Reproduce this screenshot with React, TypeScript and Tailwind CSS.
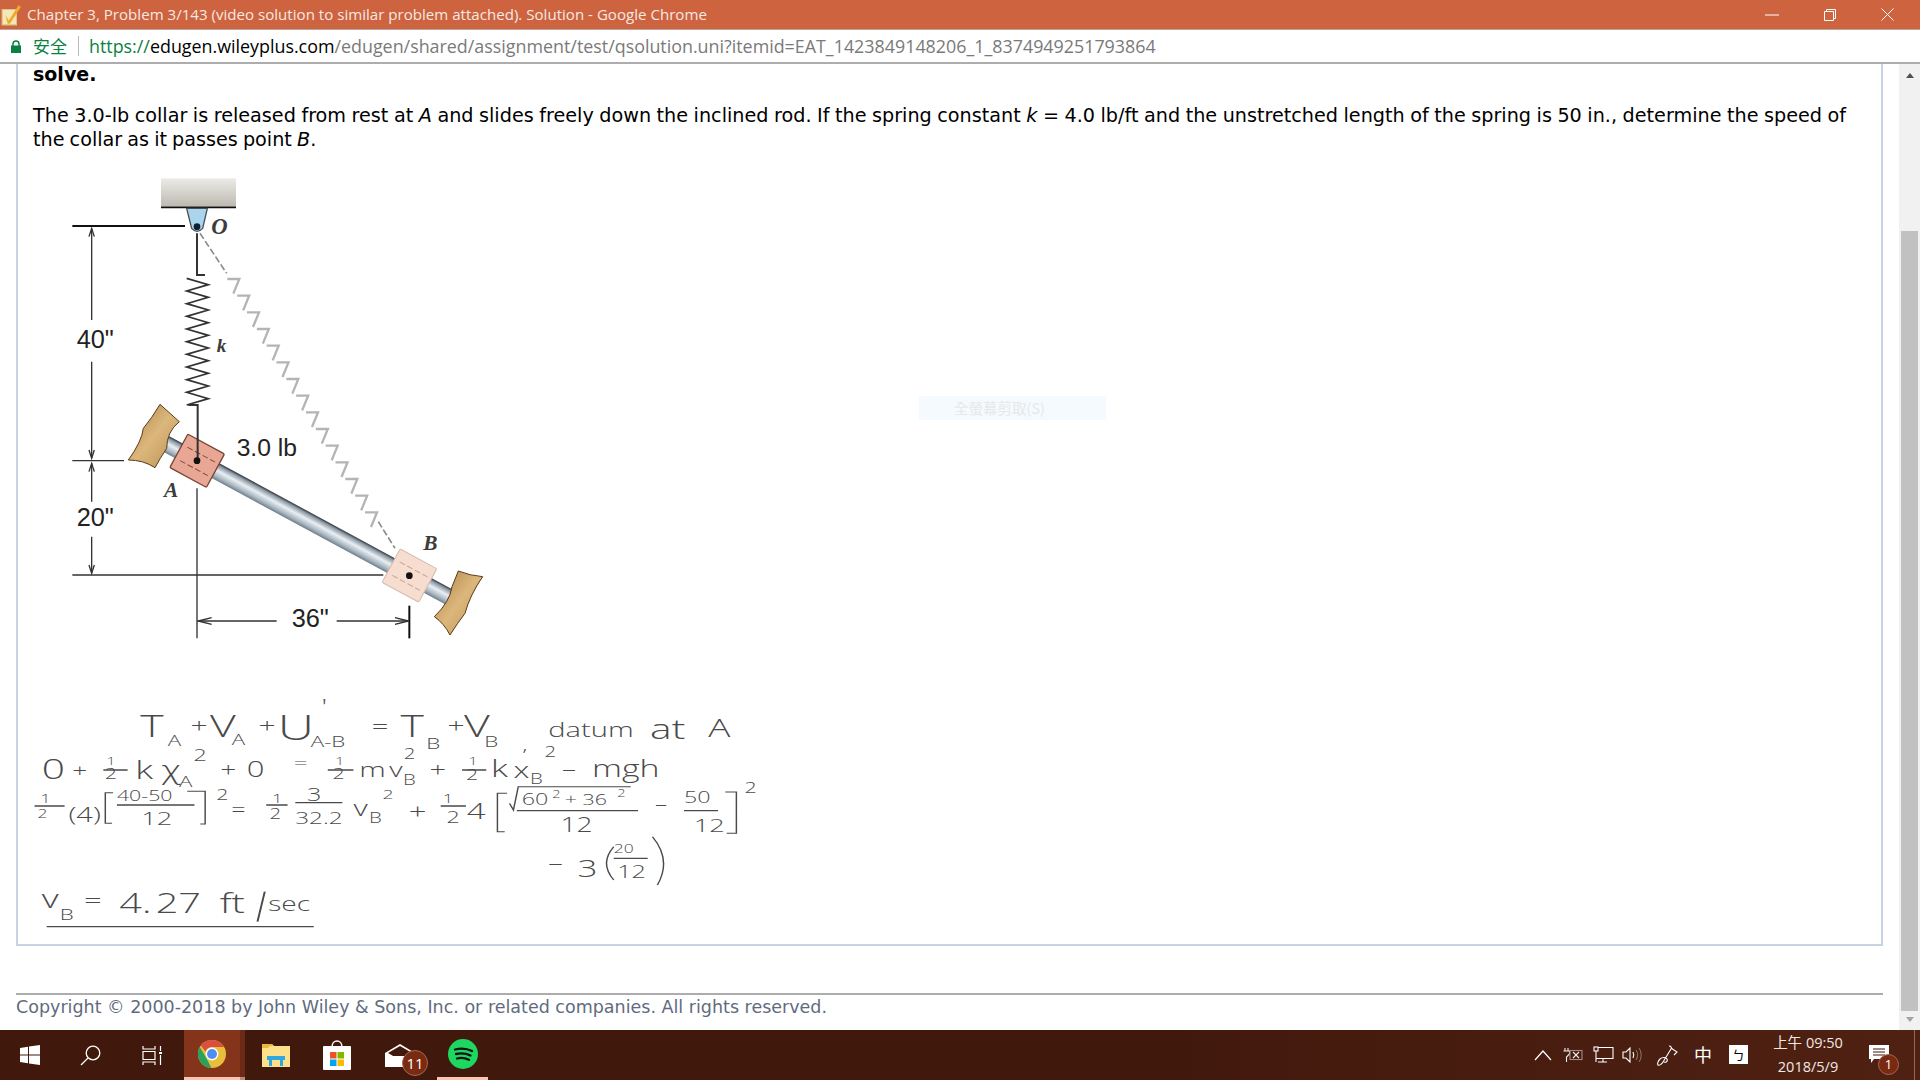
const SANS = "font-['Open_Sans',sans-serif]";
const VERDANA = "font-['DejaVu_Sans',sans-serif]";

function ChromeIcon() {
  return (
    <svg width="28" height="28" viewBox="0 0 28 28">
      <circle cx="14" cy="14" r="14" fill="#e8bf3a" />
      <path d="M14 0a14 14 0 0 1 12.100 7H14a7 7 0 0 0-6.600 4.600L2.600 5.200A14 14 0 0 1 14 0z" fill="#d9503f" />
      <path d="M1.800 7 8 17.500 13.500 28A14 14 0 0 1 1.800 7z" fill="#2ba160" />
      <circle cx="14" cy="14" r="6.400" fill="#fff" />
      <circle cx="14" cy="14" r="5" fill="#4f8ef0" />
    </svg>
  );
}

function TrayIcons() {
  return (
    <>
      <svg width="18" height="12" viewBox="0 0 18 12" className="absolute left-[1534px] top-[19px]" fill="none" stroke="#fff" strokeWidth="1.200">
        <path d="M1 11 9 2l8 9" />
      </svg>
      <svg width="22" height="16" viewBox="0 0 22 16" className="absolute left-[1562px] top-[17px]" fill="none" stroke="#eee" strokeWidth="1.100">
        <path d="M3 1v3M6 1v3M1.500 4h6v3L4.500 10v5" />
        <rect x="8" y="3.500" width="12" height="9" stroke="#a48c80" />
        <path d="m11 5 6 6M17 5l-6 6" />
      </svg>
      <svg width="21" height="17" viewBox="0 0 21 17" className="absolute left-[1593px] top-[16px]" fill="none" stroke="#fff" strokeWidth="1.100">
        <path d="M5 1.500h15v11H3M3 5v11M5 16h9M10 13v3" />
        <rect x="1" y="1" width="4" height="4" />
      </svg>
      <svg width="21" height="16" viewBox="0 0 21 16" className="absolute left-[1622px] top-[17px]" fill="none" stroke="#fff" strokeWidth="1.100">
        <path d="M1 5h3l4-4v14l-4-4H1z" />
        <path d="M11 5c1 2 1 4 0 6" />
        <path d="M14 3c2 3 2 7 0 10M17 1c3 4 3 10 0 14" stroke="#8c6d60" />
      </svg>
      <svg width="21" height="22" viewBox="0 0 21 22" className="absolute left-[1657px] top-[15px]" fill="none" stroke="#fff" strokeWidth="1.100">
        <path d="M12 1c2 0 3 2 2 3L6 17c-1 2-4 4-5 3s0-4 2-6c2-2 6-2 7 0s-1 4-3 3M14 3l6 4-3 3" />
      </svg>
    </>
  );
}

function Taskbar() {
  return (
    <div className="relative flex h-[50px] shrink-0 items-center bg-[linear-gradient(90deg,#41190c_0%,#41190c_60%,#4f2113_100%)]">
      <div className="flex h-full w-[60px] items-center justify-center">
        <svg width="20" height="20" viewBox="0 0 20 20" fill="#fff">
          <path d="M0 3l8-1.200v7.700H0zM9 1.600 20 0v9.500H9zM0 10.500h8v7.700L0 17zM9 10.500h11V20L9 18.400z" />
        </svg>
      </div>
      <div className="flex h-full w-[60px] items-center justify-center">
        <svg width="21" height="21" viewBox="0 0 21 21" fill="none" stroke="#fff" strokeWidth="1.300">
          <circle cx="13" cy="8" r="6.800" />
          <path d="M8 13 1 20" />
        </svg>
      </div>
      <div className="flex h-full w-[64px] items-center justify-center">
        <svg width="20" height="19" viewBox="0 0 20 19" fill="none" stroke="#fff" strokeWidth="1.200">
          <path d="M1 0v3h12V0M1 5.500h12v8H1zM1 19v-3h12v3M18.500 0v5M18.500 9v10" />
          <rect x="17" y="6" width="3" height="2" fill="#fff" stroke="none" />
        </svg>
      </div>
      <div className="flex h-full w-[56px] items-center justify-center border-b-[3px] border-[#f8c6b2] bg-[#84341a]">
        <ChromeIcon />
      </div>
      <div className="h-full w-[5px] border-b-[3px] border-[#b98c7c] bg-[#6a2a15]" />
      <div className="flex h-full w-[62px] items-center justify-center">
        <svg width="28" height="24" viewBox="0 0 28 24">
          <path d="M0 1h10l2 2h16v21H0z" fill="#fde08a" />
          <path d="M0 1h10l2 2H8L6 5H0z" fill="#e8b93f" />
          <path d="M5 13h18v4h-2v6h-3v-6h-8v6H7v-6H5z" fill="#2fa8e0" />
        </svg>
      </div>
      <div className="flex h-full w-[60px] items-center justify-center">
        <svg width="30" height="30" viewBox="0 0 30 30">
          <path d="M10 7c0-8 10-8 10 0" fill="none" stroke="#fff" strokeWidth="1.500" />
          <rect x="1" y="6" width="28" height="24" rx="1" fill="#fff" />
          <rect x="8" y="12" width="6.500" height="6.500" fill="#f25022" />
          <rect x="15.500" y="12" width="6.500" height="6.500" fill="#7fba00" />
          <rect x="8" y="19.500" width="6.500" height="6.500" fill="#00a4ef" />
          <rect x="15.500" y="19.500" width="6.500" height="6.500" fill="#ffb900" />
        </svg>
      </div>
      <div className="relative flex h-full w-[66px] items-center justify-center">
        <svg width="30" height="24" viewBox="0 0 30 24">
          <path d="M0 10 15 1l15 9v14H0z" fill="#fff" />
          <path d="M3 10 15 3l12 7-12 7z" fill="#41190c" />
          <path d="M0 10l15 8 15-8v3H0z" fill="#fff" />
        </svg>
        <div className="absolute left-[35px] top-[20px] flex h-[26px] w-[26px] items-center justify-center rounded-full border border-[#a06a55] bg-[#7a2a10] text-[15px] text-white">
          11
        </div>
      </div>
      <div className="ml-[4px] flex h-full w-[51px] items-center justify-center border-b-[3px] border-[#f8c6b2]">
        <svg width="30" height="30" viewBox="0 0 30 30">
          <circle cx="15" cy="15" r="15" fill="#1ed760" />
          <path d="M7 10.500c6-1.500 12-1 17 1.500M8 15c5-1 10-.700 14.500 1.500M9 19.500c4-1 8-.600 12 1.200" fill="none" stroke="#111" strokeWidth="2.300" strokeLinecap="round" />
        </svg>
      </div>
      <TrayIcons />
      <span className="absolute left-[1694px] top-[12px] text-[18px] leading-[24px] text-white font-['Noto_Sans_CJK_TC',sans-serif]">
        中
      </span>
      <div className="absolute left-[1729px] top-[15px] flex h-[19px] w-[19px] items-center justify-center bg-white text-[13px] leading-none text-black font-['Noto_Sans_CJK_TC',sans-serif]">
        ㄅ
      </div>
      <div className="absolute left-[1760px] top-[1px] w-[96px] text-center text-[14.500px] leading-[24px] text-[#f3e7e2] font-['Open_Sans','Noto_Sans_CJK_TC',sans-serif]">
        <div>上午 09:50</div>
        <div>2018/5/9</div>
      </div>
      <svg width="20" height="18" viewBox="0 0 20 18" className="absolute left-[1869px] top-[15px]">
        <path d="M0 0h20v14H5l-3 4v-4H0z" fill="#fff" />
        <path d="M4 4h12M4 7h12M4 10h12" stroke="#41190c" />
      </svg>
      <div className="absolute left-[1878px] top-[24px] flex h-[21px] w-[21px] items-center justify-center rounded-full border border-[#a06a55] bg-[#7a2a10] text-[13px] text-white">
        1
      </div>
      <div className="absolute right-[5px] top-0 h-full w-px bg-[#8c6d60]" />
    </div>
  );
}

const coil = Array.from({ length: 21 }, (_, i) => `${i % 2 ? 565 : 500},${340 + i * 19}`).join(" ");

function DashedSpring() {
  const parts = Array.from({ length: 15 }, (_, i) => {
    const cx = 640 + i * 29.500;
    const cy = 340 + i * 50;
    return `M${cx - 18} ${cy + 2}H${cx + 18}L${cx} ${cy + 46}`;
  });
  return (
    <g fill="none">
      <path d="M540 205 620 325M1075 1070l50 80" stroke="#8a8a8a" strokeWidth="5" strokeDasharray="20 8" />
      <path d={parts.join("")} stroke="#b4b4b4" strokeWidth="7" />
    </g>
  );
}

function Diagram() {
  const arrow = (x: number, y: number, dir: number) => `M${x - 8} ${y + dir * 25}L${x} ${y}L${x + 8} ${y + dir * 25}`;
  return (
    <svg width="480" height="490" viewBox="0 0 1440 1470" className="ml-[-13px] mt-[13px] block">
      <defs>
        <linearGradient id="wall" x1="0" y1="0" x2="0" y2="1">
          <stop offset="0" stopColor="#ecebe6" />
          <stop offset="1" stopColor="#bcb9b0" />
        </linearGradient>
        <linearGradient id="rod" x1="0" y1="0" x2="0" y2="1">
          <stop offset="0" stopColor="#2b3138" />
          <stop offset="0.15" stopColor="#8d99a4" />
          <stop offset="0.45" stopColor="#eaf0f4" />
          <stop offset="0.8" stopColor="#a5b3be" />
          <stop offset="1" stopColor="#6d7c88" />
        </linearGradient>
        <linearGradient id="tan" x1="0" y1="0" x2="1" y2="1">
          <stop offset="0" stopColor="#a87f45" />
          <stop offset="0.5" stopColor="#dcb77c" />
          <stop offset="1" stopColor="#b88e52" />
        </linearGradient>
      </defs>
      <rect x="423" y="40" width="225" height="85" fill="url(#wall)" />
      <path d="M423 127H648" stroke="#111" strokeWidth="5" />
      <path d="M500 130H562L548 190Q531 208 515 190Z" fill="#a9d6ec" stroke="#4a5058" strokeWidth="4" />
      <circle cx="531" cy="185" r="10" fill="#10202c" />
      <path d="M157 183H495" stroke="#111" strokeWidth="6" />
      <path d="M215 190V465M215 590V880M215 895V1010M215 1115V1225M157 887H312M157 1230H1090M531 970V1420M531 1368H770M950 1368H1165" stroke="#333" strokeWidth="4" fill="none" />
      <path d={`${arrow(215, 190, 1)}${arrow(215, 880, -1)}${arrow(215, 895, 1)}${arrow(215, 1225, -1)}`} stroke="#333" strokeWidth="4" fill="none" />
      <path d="M575 1358 535 1368 575 1378M1125 1358 1165 1368 1125 1378" stroke="#333" strokeWidth="4" fill="none" />
      <path d="M1168 1322V1420" stroke="#111" strokeWidth="6" />
      <DashedSpring />
      <g transform="translate(531 887) rotate(28.400)">
        <rect x="-108" y="-25" width="985" height="50" fill="url(#rod)" />
        <rect x="-62" y="-57" width="125" height="114" rx="4" fill="#e8a795" stroke="#7a4433" strokeWidth="4" />
        <path d="M-45 -22H50M-45 24H50" stroke="#8b4a38" strokeWidth="3" strokeDasharray="18 8" />
        <g transform="translate(724 0)">
          <rect x="-62" y="-57" width="125" height="114" rx="4" fill="#f6ddd0" stroke="#d4bcae" strokeWidth="3" />
          <path d="M-45 -22H50M-45 24H50" stroke="#c4a596" strokeWidth="3" strokeDasharray="18 8" />
        </g>
      </g>
      <path d="M420 718Q450 745 478 770Q440 800 440 850Q420 880 405 908Q370 885 325 885Q365 830 370 790Q395 760 420 718Z" fill="url(#tan)" stroke="#5a3a1a" strokeWidth="3" />
      <path d="M1315 1218Q1350 1232 1388 1235Q1350 1290 1335 1345Q1312 1375 1290 1410Q1272 1375 1243 1355Q1290 1310 1296 1265Z" fill="url(#tan)" stroke="#5a3a1a" strokeWidth="3" />
      <path d="M531 205V330H555" stroke="#333" strokeWidth="6" fill="none" />
      <polyline points={coil} fill="none" stroke="#333" strokeWidth="5" />
      <path d="M505 720H533V885" stroke="#333" strokeWidth="6" fill="none" />
      <circle cx="531" cy="887" r="10" fill="#111" />
      <circle cx="1168" cy="1232" r="10" fill="#111" />
      <g fill="#222" fontFamily="'Liberation Sans',sans-serif" fontSize="76">
        <text x="170" y="550">40"</text>
        <text x="170" y="1084">20"</text>
        <text x="650" y="872" fontSize="74">3.0 lb</text>
        <text x="815" y="1386">36"</text>
      </g>
      <g fill="#3c3c3c" fontFamily="'Liberation Serif',serif" fontStyle="italic" fontWeight="600">
        <text x="574" y="207" fontSize="68">O</text>
        <text x="590" y="560" fontSize="58">k</text>
        <text x="432" y="996" fontSize="64">A</text>
        <text x="1210" y="1156" fontSize="64">B</text>
      </g>
    </svg>
  );
}

const marks: [number, number, number, string][] = [
  [248, 140, 92, "T"], [305, 168, 46, "A"], [352, 130, 62, "+"], [392, 140, 92, "V"], [437, 166, 46, "A"], [492, 130, 62, "+"],
  [532, 150, 104, "U"], [622, 72, 60, "'"], [600, 172, 46, "A-B"], [726, 132, 60, "="], [785, 140, 92, "T"], [838, 178, 46, "B"],
  [882, 130, 62, "+"], [916, 140, 92, "V"], [958, 172, 46, "B"], [1036, 184, 50, ","], [1090, 142, 60, "datum"], [1300, 146, 84, "at"], [1420, 142, 76, "A"],
  [45, 268, 84, "0"], [108, 262, 54, "+"], [178, 226, 34, "1"], [175, 268, 44, "2"], [238, 268, 76, "k"], [292, 268, 78, "χ"], [328, 292, 46, "A"], [358, 214, 48, "2"],
  [413, 262, 58, "+"], [468, 262, 64, "0"], [565, 238, 50, "="], [650, 226, 34, "1"], [645, 266, 44, "2"], [700, 262, 62, "m"], [762, 262, 60, "v"], [790, 286, 42, "B"], [792, 206, 42, "2"],
  [845, 262, 60, "+"], [925, 226, 34, "1"], [920, 270, 44, "2"], [972, 262, 72, "k"], [1018, 264, 66, "x"], [1052, 282, 42, "B"], [1082, 202, 42, "2"], [1118, 258, 58, "–"], [1180, 262, 70, "mgh"],
  [42, 338, 38, "1"], [36, 384, 36, "2"], [100, 396, 60, "(4)"], [200, 334, 44, "40-50"], [250, 404, 56, "12"], [405, 330, 44, "2"], [436, 378, 52, "="],
  [520, 338, 38, "1"], [515, 388, 42, "2"], [592, 332, 52, "3"], [568, 402, 50, "32.2"], [688, 378, 64, "v"], [720, 400, 42, "B"], [748, 328, 40, "2"],
  [802, 386, 64, "+"], [872, 340, 38, "1"], [880, 400, 48, "2"], [922, 388, 68, "4"], [1035, 344, 48, "60"], [1098, 324, 30, "2"], [1124, 346, 44, "+ 36"], [1232, 322, 30, "2"],
  [1115, 425, 58, "12"], [1310, 360, 50, "–"], [1370, 338, 48, "50"], [1390, 425, 56, "12"], [1495, 310, 44, "2"],
  [1090, 540, 60, "–"], [1150, 560, 72, "3"], [1225, 490, 36, "20"], [1232, 565, 52, "12"],
  [45, 655, 76, "v"], [82, 690, 46, "B"], [132, 655, 64, "="], [205, 668, 82, "4."], [280, 668, 82, "27"], [412, 668, 82, "ft"], [512, 664, 58, "sec"],
];

function Handwriting() {
  return (
    <svg width="760" height="260" viewBox="0 0 1568 780" preserveAspectRatio="none" className="ml-[-13px] mt-[35px] block">
      <g fill="#4a4a4a" fontFamily="'Open Sans',sans-serif" fontWeight="300">
        {marks.map(([x, y, size, label], i) => (
          <text key={i} x={x} y={y} fontSize={size}>
            {label}
          </text>
        ))}
      </g>
      <path
        d="M172 240H222M635 240H688M912 240H962M30 348H92M200 345H360M508 345H552M568 338H665M868 348H920M1025 362H1275M1370 362H1440M1225 505H1295M55 710H606"
        stroke="#4a4a4a"
        strokeWidth="4"
        fill="none"
      />
      <path
        d="M192 308H176V400H190M345 304H382V402H372M1010 340l8 20 10-70H1260M1005 310H985V425H1000M1455 306H1478V430H1458M1225 470Q1195 520 1225 570M1305 440Q1345 510 1315 585"
        stroke="#4a4a4a"
        strokeWidth="3"
        fill="none"
      />
      <path d="M505 605 490 695" stroke="#4a4a4a" strokeWidth="4" fill="none" />
    </svg>
  );
}

export default function App() {
  return (
    <div className={`relative flex h-[1080px] w-[1920px] flex-col overflow-hidden bg-white ${SANS}`}>
      <div className="flex h-[30px] shrink-0 items-center border-b border-[#b9a59c] bg-[#cd633f]">
        <svg width="21" height="22" viewBox="0 0 19 20" className="ml-[1px]">
          <path d="M1 5h13v14H1z" fill="#f6e7b8" stroke="#d9c58a" />
          <path d="M4 10l3 5 9-14 2 2-10 15H6z" fill="#f0a92a" />
        </svg>
        <span className="ml-[5px] text-[15.100px] text-[#f7e9e3]">
          Chapter 3, Problem 3/143 (video solution to similar problem attached). Solution - Google Chrome
        </span>
        <div className="ml-auto flex items-center">
          <svg width="14" height="2" viewBox="0 0 14 2" className="mr-[45px]">
            <path d="M0 1h14" stroke="#fff" />
          </svg>
          <svg width="12" height="12" viewBox="0 0 12 12" fill="none" stroke="#fff" className="mr-[45px]">
            <path d="M2.500 2.500V.500h9v9h-2M.500 2.500h9v9h-9z" />
          </svg>
          <svg width="13" height="13" viewBox="0 0 13 13" fill="none" stroke="#fff" className="mr-[26px]">
            <path d="m.500.500 12 12M12.500.500l-12 12" />
          </svg>
        </div>
      </div>
      <div className="flex h-[34px] shrink-0 items-center border-b-2 border-[#adadad] bg-white">
        <svg width="10" height="13" viewBox="0 0 10 13" className="ml-[11px]">
          <path d="M2 6V4a3 3 0 0 1 6 0v2" fill="none" stroke="#0b8043" strokeWidth="1.500" />
          <rect x="0" y="5.500" width="10" height="7.500" fill="#0b8043" />
        </svg>
        <span className="ml-[12px] text-[17px] text-[#0b8043] font-['Noto_Sans_CJK_SC',sans-serif]">安全</span>
        <div className="ml-[11px] h-[20px] w-px bg-[#bbbbbb]" />
        <div className="ml-[10px] whitespace-nowrap text-[17.860px] text-[#7a7a7a]">
          <span className="text-[#0b8043]">https://</span>
          <span className="text-black">edugen.wileyplus.com</span>
          /edugen/shared/assignment/test/qsolution.uni?itemid=EAT_1423849148206_1_8374949251793864
        </div>
      </div>
      <div className="flex min-h-0 flex-1">
        <div className={`relative min-w-0 flex-1 pl-4 ${VERDANA}`}>
          <div className="h-[882px] w-[1867px] border-x-2 border-b-2 border-[#c9d3e3] px-[15px]">
            <div className="text-[19px] font-bold leading-[20px] text-black">solve.</div>
            <p className="mt-[20px] w-[1813px] text-justify text-[19.200px] leading-[24px] text-black [word-spacing:-1px]">
              The 3.0-lb collar is released from rest at <i>A</i> and slides freely down the inclined rod. If the spring constant <i>k</i> = 4.0 lb/ft and the unstretched length of the spring is 50 in., determine the speed of the collar as it passes point <i>B</i>.
            </p>
            <Diagram />
            <Handwriting />
          </div>
          <div className="mt-[47px] h-[2px] w-[1867px] bg-[#adadad]" />
          <div className="text-[17.500px] leading-[24px] text-[#5f6b7d]">
            Copyright © 2000-2018 by John Wiley &amp; Sons, Inc. or related companies. All rights reserved.
          </div>
          <div className="absolute left-[919px] top-[332px] flex h-[24px] w-[187px] items-center bg-[#f5fafe] pl-[35px] text-[14.500px] text-[#e8e8e8] font-['Noto_Sans_CJK_TC',sans-serif]">
            全螢幕剪取(S)
          </div>
        </div>
        <div className="relative flex w-[21px] shrink-0 flex-col items-center bg-[#f1f1f1]">
          <div className="mt-[9px] h-0 w-0 border-x-[4.500px] border-b-[5px] border-x-transparent border-b-[#505050]" />
          <div className="mt-[153px] h-[780px] w-[17px] bg-[#c1c1c1]" />
          <div className="mt-[6px] h-0 w-0 border-x-[4.500px] border-t-[5px] border-x-transparent border-t-[#a3a3a3]" />
        </div>
      </div>
      <Taskbar />
    </div>
  );
}
